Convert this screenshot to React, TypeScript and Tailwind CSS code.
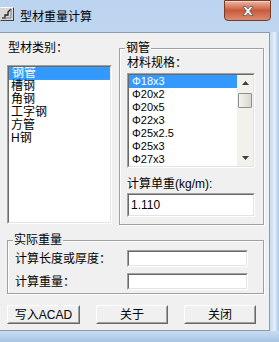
import React from "react";

const cjk = "font-['Liberation_Sans','Noto_Sans_CJK_SC',sans-serif]";

function Sunken({ className, children }: { className?: string; children?: React.ReactNode }) {
  return (
    <div className={`border border-t-[#a0a0a0] border-l-[#a0a0a0] border-r-white border-b-white ${className ?? ""}`}>
      <div className="w-full h-full border border-t-[#696969] border-l-[#696969] border-r-[#e3e3e3] border-b-[#e3e3e3] bg-white overflow-hidden">
        {children}
      </div>
    </div>
  );
}

function Button({ label, w }: { label: string; w: string }) {
  return (
    <div className={`${w} h-[19px] border border-t-white border-l-white border-r-[#696969] border-b-[#696969]`}>
      <div className={`w-full h-full border border-transparent border-r-[#a0a0a0] border-b-[#a0a0a0] flex items-center justify-center text-[12px] leading-[14px] text-black ${cjk}`}>
        {label}
      </div>
    </div>
  );
}

function Group({ title, className, children }: { title: string; className?: string; children?: React.ReactNode }) {
  return (
    <div className={`relative border border-[#a0a0a0] shadow-[inset_1px_1px_0_#ffffff,1px_1px_0_#ffffff] ${className ?? ""}`}>
      <div className={`absolute left-[5px] top-[-8px] px-[1px] bg-[#f0f0f0] text-[12px] leading-[14px] text-black ${cjk}`}>
        {title}
      </div>
      {children}
    </div>
  );
}

export default function App() {
  const leftItems = ["钢管", "槽钢", "角钢", "工字钢", "方管", "H钢"];
  const rightItems = ["Φ18x3", "Φ20x2", "Φ20x5", "Φ22x3", "Φ25x2.5", "Φ25x3", "Φ27x3"];
  return (
    <div className="w-[279px] h-[342px] flex flex-col bg-gradient-to-b from-[#bcd4ef] via-[#c8dcf2] to-[#b4cdea] overflow-hidden">
      {/* Title bar */}
      <div className="h-[32px] flex items-start shrink-0">
        <div className="mt-[7px] w-[14px] h-[14px] bg-[#d8d8d8] border border-t-white border-l-[#d8d8d8] border-r-[#404040] border-b-[#404040] flex items-center justify-center">
          <svg width="12" height="12" viewBox="0 0 12 12">
            <path d="M1 10 L4 10 L4 7 L7 7 L7 4 L10 1" fill="none" stroke="#202020" strokeWidth="1.3" />
            <path d="M10 1 L10 10 L1 10" fill="none" stroke="#808080" strokeWidth="1" />
          </svg>
        </div>
        <div className={`ml-[6px] mt-[10px] text-[12px] leading-[14px] text-black ${cjk}`}>型材重量计算</div>
        <div className="flex-1" />
        <div className="w-[47px] h-[21px] rounded-b-[4px] border border-[#7a3a2a] bg-gradient-to-b from-[#eab7a4] via-[#c9593a] to-[#d88c6e] flex items-center justify-center shadow-[inset_0_1px_0_#f6d5c8]">
          <svg width="12" height="10" viewBox="0 0 12 10">
            <path d="M1 0.5 L4 0.5 L6 3 L8 0.5 L11 0.5 L7.6 5 L11 9.5 L8 9.5 L6 7 L4 9.5 L1 9.5 L4.4 5 Z" fill="#ffffff" stroke="#5a5a5a" strokeWidth="0.8" />
          </svg>
        </div>
        <div className="w-[8px]" />
      </div>

      {/* Body */}
      <div className="flex shrink-0">
        <div className="w-[270px] h-[299px] bg-[#f0f0f0] border-t border-r border-b border-[#8c9cb0] flex flex-col">
          {/* Row 1 */}
          <div className="flex items-start">
            <div className="ml-[7px] w-[105px] flex flex-col">
              <div className={`mt-[8px] pl-[1px] h-[14px] text-[12px] leading-[14px] text-black ${cjk}`}>型材类别：</div>
              <Sunken className="mt-[10px] w-[105px] h-[159px]">
                <div className="flex flex-col">
                  {leftItems.map((it, i) => (
                    <div
                      key={it}
                      className={`h-[13px] pl-[2px] text-[12px] leading-[13px] ${cjk} ${
                        i === 0 ? "bg-[#3399ff] text-white border border-dotted border-[#d08040] pl-[1px]" : "text-black"
                      }`}
                    >
                      <span className={i === 0 ? "relative top-[-1px]" : ""}>{it}</span>
                    </div>
                  ))}
                </div>
              </Sunken>
            </div>

            <Group title="钢管" className="ml-[7px] mt-[15px] w-[145px] h-[177px]">
              <div className="pl-[7px] pt-[7px] flex flex-col">
                <div className={`h-[14px] text-[12px] leading-[14px] text-black ${cjk}`}>材料规格：</div>
                <Sunken className="mt-[3px] w-[128px] h-[95px]">
                  <div className="flex h-full">
                    <div className="flex-1 flex flex-col">
                      {rightItems.map((it, i) => (
                        <div
                          key={it}
                          className={`h-[13px] pl-[3px] text-[11px] leading-[13px] font-['Liberation_Sans',sans-serif] ${
                            i === 0 ? "bg-[#3399ff] text-white" : "text-black"
                          }`}
                        >
                          {it}
                        </div>
                      ))}
                    </div>
                    <div className="w-[16px] h-full bg-[#f2f1ec] flex flex-col">
                      <div className="h-[16px] flex items-center justify-center">
                        <svg width="7" height="4" viewBox="0 0 7 4">
                          <path d="M0 4 L3.5 0 L7 4 Z" fill="#404040" />
                        </svg>
                      </div>
                      <div className="mt-[2px] ml-[1px] w-[14px] h-[15px] bg-gradient-to-r from-[#f4f3ee] to-[#d8d6cf] border border-[#8f8f8f] rounded-[1px]" />
                      <div className="flex-1" />
                      <div className="h-[16px] flex items-center justify-center">
                        <svg width="7" height="4" viewBox="0 0 7 4">
                          <path d="M0 0 L7 0 L3.5 4 Z" fill="#404040" />
                        </svg>
                      </div>
                    </div>
                  </div>
                </Sunken>
                <div className={`mt-[9px] h-[14px] text-[12px] leading-[14px] text-black ${cjk}`}>计算单重(kg/m):</div>
                <Sunken className="mt-[2px] w-[128px] h-[24px]">
                  <div className="pl-[2px] pt-[3px] text-[12px] leading-[14px] text-black font-['Liberation_Sans',sans-serif]">1.110</div>
                </Sunken>
              </div>
            </Group>
          </div>

          {/* Row 2 */}
          <Group title="实际重量" className="ml-[7px] mt-[15px] w-[257px] h-[54px]">
            <div className="pl-[7px] pt-[9px] flex flex-col">
              <div className="flex items-center">
                <div className={`w-[112px] text-[12px] leading-[14px] text-black ${cjk}`}>计算长度或厚度：</div>
                <Sunken className="w-[121px] h-[17px]" />
              </div>
              <div className="mt-[6px] flex items-center">
                <div className={`w-[112px] text-[12px] leading-[14px] text-black ${cjk}`}>计算重量：</div>
                <Sunken className="w-[121px] h-[17px]" />
              </div>
            </div>
          </Group>

          {/* Buttons */}
          <div className="mt-[11px] ml-[7px] flex gap-[16px]">
            <Button label="写入ACAD" w="w-[73px]" />
            <Button label="关于" w="w-[72px]" />
            <Button label="关闭" w="w-[72px]" />
          </div>
        </div>
        <div className="flex-1 bg-gradient-to-r from-[#c4d9f1] via-[#e6f0fa] to-[#a9c6e6]" />
      </div>
      <div className="flex-1 bg-gradient-to-b from-[#c8dcf2] to-[#a8c4e4]" />
    </div>
  );
}
